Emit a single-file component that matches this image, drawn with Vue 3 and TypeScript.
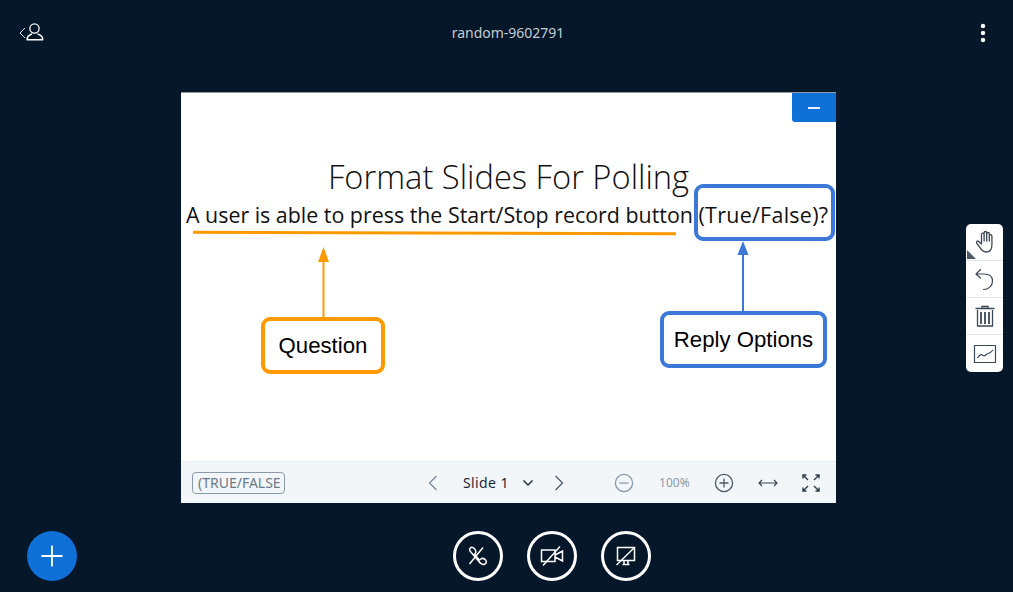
<script setup lang="ts">
const slideLabel: string = 'Slide 1'
</script>

<template>
  <div class="page">
    <header class="top">
      <button class="plain back" aria-label="Users">
        <svg width="26" height="22" viewBox="0 0 26 22" fill="none" stroke="#fff" stroke-width="1.3">
          <path d="M6 6 L1 11 L6 16" stroke="#d5e6f5" stroke-width="1" />
          <circle cx="15.5" cy="6.5" r="4.6" />
          <path d="M8 17.5 C8.3 14 10.8 12.6 13 12 M23.8 17.5 C23.5 14 21 12.6 18.6 12 M7.6 17.7 H24.2" stroke-width="1.5" />
        </svg>
      </button>
      <div class="meeting">random-9602791</div>
      <button class="plain dots" aria-label="Options">
        <span></span><span></span><span></span>
      </button>
    </header>

    <main class="stage">
      <section class="slide">
        <div class="canvas">
          <h1 class="title">Format Slides For Polling</h1>
          <p class="question">A user is able to press the Start/Stop record button <span class="options">(True/False)?</span></p>

          <svg class="marks" width="655" height="368" viewBox="0 0 655 368" fill="none">
            <path d="M12 139.2 L495 140.8" stroke="#ff9900" stroke-width="3" />
            <path d="M142.5 165 V225" stroke="#ff9900" stroke-width="2" />
            <path d="M142.5 154 L148 169 H137 Z" fill="#ff9900" />
            <path d="M562 160 V218" stroke="#3c78d8" stroke-width="2" />
            <path d="M562 148 L567.5 162 H556.5 Z" fill="#3c78d8" />
          </svg>
          <div class="callout orange q-box">Question</div>
          <div class="callout blue opt-box"></div>
          <div class="callout blue reply-box">Reply Options</div>

          <button class="minimize" aria-label="Hide presentation"><span></span></button>
        </div>

        <footer class="controls">
          <div class="tag">(TRUE/FALSE</div>
          <div class="pager">
            <svg width="12" height="18" viewBox="0 0 12 18" fill="none" stroke="#7b8a99" stroke-width="1.3"><path d="M9.5 2 L2.5 9 L9.5 16" /></svg>
            <span class="slide-name">{{ slideLabel }}</span>
            <svg class="caret" width="12" height="8" viewBox="0 0 12 8" fill="none" stroke="#20303f" stroke-width="1.5"><path d="M1.5 1.5 L6 6 L10.5 1.5" /></svg>
            <svg class="next" width="12" height="18" viewBox="0 0 12 18" fill="none" stroke="#4d5b69" stroke-width="1.3"><path d="M2.5 2 L9.5 9 L2.5 16" /></svg>
          </div>
          <div class="zoom">
            <svg width="20" height="20" viewBox="0 0 20 20" fill="none" stroke="#8b9aa8" stroke-width="1.3"><circle cx="10" cy="10" r="8.6" /><path d="M5.5 10 H14.5" /></svg>
            <span class="pct">100%</span>
            <svg width="20" height="20" viewBox="0 0 20 20" fill="none" stroke="#4d5b69" stroke-width="1.3"><circle cx="10" cy="10" r="8.6" /><path d="M5.5 10 H14.5 M10 5.5 V14.5" /></svg>
            <svg class="fit" width="20" height="10" viewBox="0 0 20 10" fill="none" stroke="#3a4856" stroke-width="1.2"><path d="M1 5 H19 M4 2 L1 5 L4 8 M16 2 L19 5 L16 8" /></svg>
            <svg class="full" width="18" height="18" viewBox="0 0 18 18" fill="none" stroke="#2f3d4a" stroke-width="1.4"><path d="M1 4.5 V1 H4.5 M1 1 L6 6 M17 4.5 V1 H13.5 M17 1 L12 6 M1 13.5 V17 H4.5 M1 17 L6 12 M17 13.5 V17 H13.5 M17 17 L12 12" /></svg>
          </div>
        </footer>
      </section>
    </main>

    <aside class="tools">
      <div class="tool first">
        <svg width="22" height="24" viewBox="0 0 22 24" fill="none" stroke="#3a4856" stroke-width="1.3" stroke-linejoin="round" stroke-linecap="round">
          <path d="M7.5 13 V4.5 a1.3 1.3 0 0 1 2.6 0 V11 M10.1 11 V2.8 a1.3 1.3 0 0 1 2.6 0 V11 M12.7 11 V3.8 a1.3 1.3 0 0 1 2.6 0 V11 M15.3 11 V6 a1.3 1.3 0 0 1 2.6 0 V15 C17.9 19.5 15.5 22 12 22 C9.2 22 7.8 20.6 6.3 18.2 L2.6 12.8 C2 11.5 3.6 10.4 4.7 11.4 L7.5 14" />
        </svg>
        <i class="corner"></i>
      </div>
      <div class="tool">
        <svg width="22" height="24" viewBox="0 0 22 24" fill="none" stroke="#3a4856" stroke-width="1.2" stroke-linecap="round" stroke-linejoin="round">
          <path d="M6.5 2.5 L2 7 L6.5 11 M2 7 H10 C15.5 7 18.5 9.5 18.5 14 C18.5 19 14.5 22.5 9.5 22.5" />
        </svg>
      </div>
      <div class="tool">
        <svg width="22" height="24" viewBox="0 0 22 24" fill="none" stroke="#3a4856" stroke-width="1.3">
          <path d="M1.5 4.5 H20.5 M8 4.5 V2.5 H14 V4.5 M3.5 6 V22 H18.5 V6" />
          <path d="M7 8 V20 M11 8 V20 M15 8 V20" stroke-width="1.8" />
        </svg>
      </div>
      <div class="tool">
        <svg width="24" height="20" viewBox="0 0 24 20" fill="none" stroke="#3a4856" stroke-width="1.2" stroke-linejoin="round">
          <rect x="1.5" y="1.5" width="21" height="17" />
          <path d="M4.5 14 C6.5 10.5 8 10 10 11.5 C12 13 13 10 15 9.5 C17 9 18 8.5 20 6" />
        </svg>
      </div>
    </aside>

    <footer class="bar">
      <button class="fab" aria-label="Actions">
        <svg width="24" height="24" viewBox="0 0 24 24" stroke="#fff" stroke-width="1.8"><path d="M1.5 12 H22.5 M12 1.5 V22.5" /></svg>
      </button>
      <div class="calls">
        <button class="round" aria-label="Join audio">
          <svg width="20" height="20" viewBox="0 0 20 20" fill="none" stroke="#fff" stroke-width="1.5" stroke-linejoin="round">
            <path d="M3 1.5 C1.5 2.2 1.2 4 2.4 5.6 L10.5 15 C12.5 17.6 15 19.2 17 18 C18.8 16.8 18.6 14.4 17 13.4 C15.6 12.4 14 12 12.8 13 L11.4 14 L6.5 8.2 L7.6 7 C8.4 5.6 7.6 4 6.4 2.8 C5.4 1.6 4.2 0.9 3 1.5 Z" />
            <path d="M15 1.5 L1.5 18" />
          </svg>
        </button>
        <button class="round" aria-label="Share webcam">
          <svg width="24" height="20" viewBox="0 0 24 20" fill="none" stroke="#fff" stroke-width="1.5">
            <path d="M15 4 H1.5 V15.5 H15 Z M15 9 L22.5 5 V15 L15 11" />
            <path d="M20 0.5 L3 19.5" stroke-width="1.4" />
          </svg>
        </button>
        <button class="round" aria-label="Share screen">
          <svg width="22" height="20" viewBox="0 0 22 20" fill="none" stroke="#fff" stroke-width="1.5">
            <path d="M2.5 1.5 H19.5 V14.5 H2.5 Z M7.5 18.5 H14.5 M9 15 V18 M13 15 V18" />
            <path d="M19.5 1.5 L1.5 19" stroke-width="1.4" />
          </svg>
        </button>
      </div>
    </footer>
  </div>
</template>

<style>
html, body { margin: 0; background: #06172a; }
</style>

<style scoped>
.page {
  position: relative;
  width: 1013px;
  height: 592px;
  overflow: hidden;
  background: #06172a;
  font-family: "Noto Sans", sans-serif;
}
button { padding: 0; border: 0; background: none; cursor: pointer; }
.top {
  height: 66px;
  display: grid;
  grid-template-columns: 1fr auto 1fr;
  align-items: center;
  padding: 0 28px 0 19px;
  box-sizing: border-box;
}
.plain { display: flex; }
.back { justify-self: start; margin-top: -1px; }
.meeting { color: #c3cbd3; font-size: 14px; line-height: 20px; margin-left: 12px; }
.dots { justify-self: end; flex-direction: column; gap: 3px; }
.dots span { width: 4px; height: 4px; border-radius: 50%; background: #fff; box-shadow: 0 0 1px #fff; }
.stage { padding: 27px 0 0 181px; }
.slide {
  width: 655px;
  height: 410px;
  display: flex;
  flex-direction: column;
  background: #fff;
  box-shadow: 0 -1px 0 #8f99a3;
}
.canvas { position: relative; flex: 1; }
.title {
  margin: 0;
  padding-top: 61px;
  text-align: center;
  font: 300 32.7px/46px "Open Sans", sans-serif;
  color: #111;
}
.question {
  margin: 0;
  padding-left: 5px;
  white-space: nowrap;
  font: 400 21.4px/30px "Open Sans", sans-serif;
  color: #111;
}
.options { letter-spacing: 0.3px; }
.marks { position: absolute; left: 0; top: 0; pointer-events: none; }
.callout {
  position: absolute;
  box-sizing: border-box;
  display: flex;
  align-items: center;
  justify-content: center;
  border-radius: 9px;
  border: 4px solid;
  font: 400 22.2px/26px "Liberation Sans", sans-serif;
  color: #000;
}
.orange { border-color: #ff9900; }
.blue { border-color: #3c78d8; }
.q-box { left: 80px; top: 224px; width: 124px; height: 57px; }
.opt-box { left: 513px; top: 91px; width: 141px; height: 57px; }
.reply-box { left: 479px; top: 218px; width: 167px; height: 57px; }
.minimize {
  position: absolute;
  right: 0;
  top: 0;
  width: 44px;
  height: 29px;
  display: flex;
  align-items: center;
  justify-content: center;
  background: #0f70d7;
  border-radius: 0 0 0 3px;
}
.minimize span { width: 12px; height: 2px; background: #e8f1fb; }
.controls {
  height: 42px;
  box-sizing: border-box;
  display: flex;
  align-items: center;
  padding-left: 11px;
  background: #f3f6f9;
  border-top: 1px solid #e9eef3;
}
.tag {
  width: 93px;
  height: 22px;
  box-sizing: border-box;
  border: 1px solid #8b9aa8;
  border-radius: 4px;
  padding-left: 5px;
  color: #6b7a88;
  font-size: 14px;
  line-height: 20px;
  white-space: nowrap;
}
.pager { display: flex; align-items: center; margin-left: 142px; }
.slide-name { margin-left: 24px; font-size: 14px; line-height: 20px; color: #1c2a38; letter-spacing: 0.4px; }
.caret { margin-left: 13px; }
.next { margin-left: 19px; }
.zoom { display: flex; align-items: center; margin-left: 49px; }
.pct { width: 31px; margin: 0 24px 0 25px; text-align: center; font-size: 12px; line-height: 16px; color: #8b9aa8; white-space: nowrap; }
.fit { margin-left: 24px; }
.full { margin-left: 24px; }
.tools {
  position: absolute;
  left: 966px;
  top: 224px;
  width: 37px;
  background: #fff;
  border-radius: 5px;
  overflow: hidden;
}
.tool {
  position: relative;
  height: 36px;
  display: flex;
  align-items: center;
  justify-content: center;
  border-bottom: 1px solid #e3e8ec;
}
.tool:last-child { border-bottom: 0; height: 37px; }
.corner {
  position: absolute;
  left: 1px;
  bottom: 1px;
  width: 0;
  height: 0;
  border-left: 9px solid #4d5b69;
  border-top: 9px solid transparent;
}
.bar {
  display: flex;
  align-items: center;
  padding: 28px 0 0 27px;
}
.fab {
  width: 50px;
  height: 50px;
  border-radius: 50%;
  background: #0f70d7;
  display: flex;
  align-items: center;
  justify-content: center;
}
.calls { display: flex; gap: 24px; margin-left: 376px; }
.round {
  width: 50px;
  height: 50px;
  box-sizing: border-box;
  border: 3px solid #fff;
  border-radius: 50%;
  display: flex;
  align-items: center;
  justify-content: center;
}
</style>
